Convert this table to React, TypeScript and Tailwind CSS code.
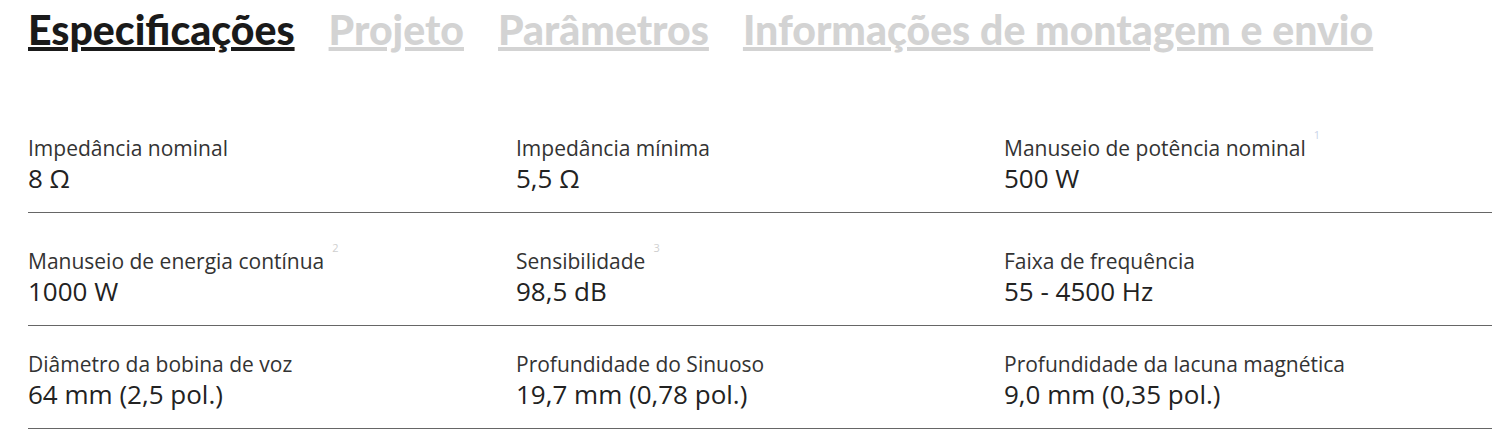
import React from 'react';

type Spec = {
    label: string;
    value: string;
    note?: string;
    noteColor?: string;
};

const tabs = ['Especificações', 'Projeto', 'Parâmetros', 'Informações de montagem e envio'];

const rows: Spec[][] = [
    [
        { label: 'Impedância nominal', value: '8 Ω' },
        { label: 'Impedância mínima', value: '5,5 Ω' },
        { label: 'Manuseio de potência nominal', value: '500 W', note: '1', noteColor: 'text-[#c9d3e8]' },
    ],
    [
        { label: 'Manuseio de energia contínua', value: '1000 W', note: '2', noteColor: 'text-[#cfcfcf]' },
        { label: 'Sensibilidade', value: '98,5 dB', note: '3', noteColor: 'text-[#cfcfcf]' },
        { label: 'Faixa de frequência', value: '55 - 4500 Hz' },
    ],
    [
        { label: 'Diâmetro da bobina de voz', value: '64 mm (2,5 pol.)' },
        { label: 'Profundidade do Sinuoso', value: '19,7 mm (0,78 pol.)' },
        { label: 'Profundidade da lacuna magnética', value: '9,0 mm (0,35 pol.)' },
    ],
];

const SpecCell: React.FC<{ spec: Spec }> = ({ spec }) => (
    <div className="pb-[19px]">
        <div className="relative inline-block text-[21px] leading-[29px] text-[#333]">
            {spec.label}
            {spec.note && (
                <span className={`absolute left-full ml-[8px] -top-[5px] text-[11px] leading-none ${spec.noteColor}`}>
                    {spec.note}
                </span>
            )}
        </div>
        <div className="text-[26px] leading-[30px] text-[#222]">{spec.value}</div>
    </div>
);

export default function App() {
    return (
        <div className="bg-white min-h-screen pl-[28px] pr-[14px]" style={{ fontFamily: '"Open Sans", sans-serif' }}>
            <div className="flex gap-[34px] pt-[8px] h-[100px]" style={{ fontFamily: 'Lato, sans-serif' }}>
                {tabs.map((t, i) => (
                    <span
                        key={t}
                        className={`text-[41px] leading-[44px] font-black underline decoration-[4px] underline-offset-[2px] ${i === 0 ? 'text-[#1a1a1a]' : 'text-[#d3d3d3]'}`}
                    >
                        {t}
                    </span>
                ))}
            </div>
            {rows.map((row, r) => {
                const hasNote = row.some(s => s.note);
                return (
                    <div key={r} className={`grid grid-cols-3 border-b border-[#666] ${hasNote ? 'pt-[34px]' : 'pt-[24px]'}`}>
                        {row.map(s => (
                            <SpecCell key={s.label} spec={s} />
                        ))}
                    </div>
                );
            })}
        </div>
    );
}
